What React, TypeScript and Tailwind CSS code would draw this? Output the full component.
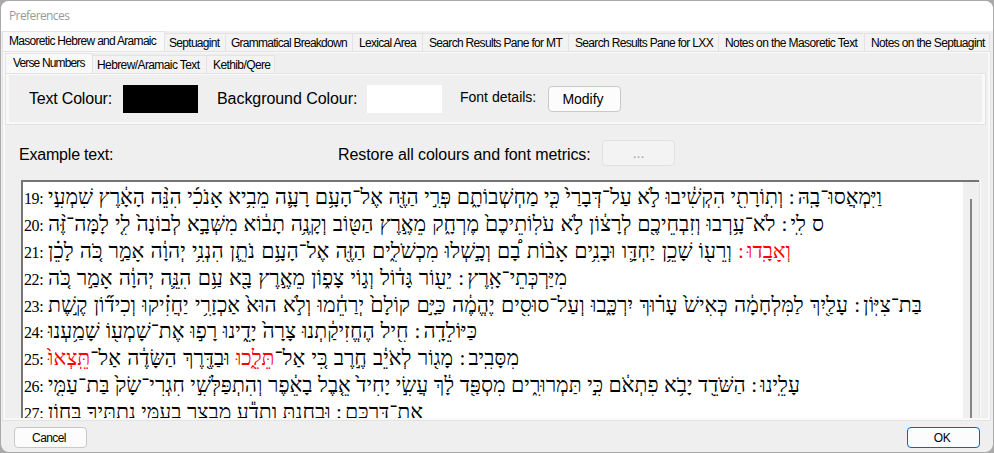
import React from "react";

const mainTabs: [string, string, string][] = [
  ["Septuagint", "w-[61px] pl-[4px]", "tracking-[-0.7px]"],
  ["Grammatical Breakdown", "w-[127px] pl-[5px]", "tracking-[-0.74px]"],
  ["Lexical Area", "w-[70px] pl-[6px]", "tracking-[-0.7px]"],
  ["Search Results Pane for MT", "w-[146px] pl-[6px]", "tracking-[-0.68px]"],
  ["Search Results Pane for LXX", "w-[150px] pl-[6px]", "tracking-[-0.67px]"],
  ["Notes on the Masoretic Text", "w-[146px] pl-[6px]", "tracking-[-0.6px]"],
  ["Notes on the Septuagint", "w-[125px] pl-[6px]", "tracking-[-0.66px]"],
];

type Verse = { n: number; width: string; text: string };

// Words between asterisks are shown in red.
const verses: Verse[] = [
  { n: 19, width: "w-[834px]", text: "וַיִּמְאֲסוּ־בָֽהּ׃ וְתֽוֹרָתִ֖י הִקְשִׁ֔יבוּ לֹ֣א עַל־דְּבָרַי֙ כִּ֤י מַחְשְׁבוֹתָ֑ם פְּרִ֣י הַזֶּ֖ה אֶל־הָעָ֥ם רָעָ֛ה מֵבִ֥יא אָנֹכִ֜י הִנֵּ֨ה הָאָ֔רֶץ שִׁמְעִ֣י" },
  { n: 20, width: "w-[776px]", text: "ס לִֽי׃ לֹא־עָ֥רְבוּ וְזִבְחֵיכֶ֖ם לְרָצ֔וֹן לֹ֣א עֹלֽוֹתֵיכֶם֙ מֶרְחָ֑ק מֵאֶ֣רֶץ הַטּ֖וֹב וְקָנֶ֥ה תָב֔וֹא מִשְּׁבָ֣א לְבוֹנָה֙ לִ֤י לָמָּה־זֶּ֨ה" },
  { n: 21, width: "w-[743px]", text: "*וְאָבָֽדוּ׃* וְרֵע֖וֹ שָׁכֵ֥ן יַחְדָּ֛ו וּבָנִ֥ים אָב֨וֹת בָ֠ם וְכָ֣שְׁלוּ מִכְשֹׁלִ֑ים הַזֶּ֖ה אֶל־הָעָ֥ם נֹתֵ֛ן הִנְנִ֥י יְהוָ֔ה אָמַ֣ר כֹּ֚ה לָכֵ֗ן" },
  { n: 22, width: "w-[519px]", text: "מִיַּרְכְּתֵי־אָֽרֶץ׃ יֵע֖וֹר גָּד֔וֹל וְג֣וֹי צָפ֑וֹן מֵאֶ֣רֶץ בָּ֖א עַ֥ם הִנֵּ֛ה יְהוָ֔ה אָמַ֣ר כֹּ֚ה" },
  { n: 23, width: "w-[874px]", text: "בַּת־צִיּֽוֹן׃ עָלַ֖יִךְ לַמִּלְחָמָ֔ה כְּאִישׁ֙ עָר֗וּךְ יִרְכָּ֑בוּ וְעַל־סוּסִ֖ים יֶהֱמֶ֔ה כַּיָּ֣ם קוֹלָם֙ יְרַחֵ֔מוּ וְלֹ֣א הוּא֙ אַכְזָרִ֥י יַחֲזִ֗יקוּ וְכִיד֞וֹן קֶ֣שֶׁת" },
  { n: 24, width: "w-[429px]", text: "כַּיּוֹלֵדָֽה׃ חִ֖יל הֶחֱזִיקַ֔תְנוּ צָרָה֙ יָדֵ֑ינוּ רָפ֣וּ אֶת־שָׁמְע֖וֹ שָׁמַ֥עְנוּ" },
  { n: 25, width: "w-[471px]", text: "מִסָּבִֽיב׃ מָג֖וֹר לְאֹיֵ֔ב חֶ֣רֶב כִּ֚י אַל־*תֵּלֵ֑כוּ* וּבַדֶּ֖רֶךְ הַשָּׂדֶ֔ה אַל־*תֵּֽצְאוּ֙*" },
  { n: 26, width: "w-[752px]", text: "עָלֵֽינוּ׃ הַשֹּׁדֵ֖ד יָבֹ֥א פִתְאֹ֔ם כִּ֣י תַּמְרוּרִ֑ים מִסְפַּ֖ד לָ֔ךְ עֲשִׂ֣י יָחִיד֙ אֵ֤בֶל בָאֵ֔פֶר וְהִתְפַּלְּשִׁ֣י חִגְרִי־שָׂק֙ בַּת־עַמִּ֤י" },
  { n: 27, width: "w-[375px]", text: "אֶת־דַּרְכָּֽם׃ וּבָחַנְתָּ֖ וְתֵדַ֕ע מִבְצָ֑ר בְעַמִּ֛י נְתַתִּ֥יךָ בָּח֛וֹן" },
];

function Label({ children, className }: { children: React.ReactNode; className: string }) {
  return <span className={`block shrink-0 whitespace-nowrap ${className}`}>{children}</span>;
}

// Gives the sof pasuq an advance of its own, since its glyph has almost none.
function Words({ text }: { text: string }) {
  const [head, tail] = text.split("׃");
  return tail === undefined ? (
    <>{head}</>
  ) : (
    <>
      {head}
      <span className="ms-[5px] tracking-[4px]">׃</span>
      {tail}
    </>
  );
}

export default function App() {
  return (
    <div className="h-[453px] w-[994px] overflow-hidden bg-[#aaaaaa] pt-px pl-px font-['Liberation_Sans',Arial,sans-serif] text-black">
      <div className="flex h-[451px] w-[992px] flex-col overflow-hidden rounded-lg bg-[#efefef]">
        <div className="h-[30px] shrink-0 bg-white pl-2 font-['Open_Sans','Noto_Sans',sans-serif] text-[12px] leading-[30px] tracking-[-0.6px] text-[#999]">
          Preferences
        </div>

        <div className="flex h-[20px] shrink-0 items-end pl-px text-[12px]">
          <div className="h-[20px] w-[163px] shrink-0 border-x border-t border-[#e3e3e3] bg-[#f9f9f9] pl-[6px] leading-[18px]">
            <Label className="tracking-[-0.7px]">Masoretic Hebrew and Aramaic</Label>
          </div>
          {mainTabs.map(([name, box, tracking]) => (
            <div key={name} className={`h-[18px] shrink-0 border-t border-r border-[#e3e3e3] bg-[#f3f3f3] leading-[18px] ${box}`}>
              <Label className={tracking}>{name}</Label>
            </div>
          ))}
        </div>

        <div className="ml-px flex h-[370px] w-[989px] shrink-0 flex-col border border-[#e3e3e3] bg-[#f9f9f9] px-[2px] pt-px pb-[2px]">
          <div className="flex min-h-0 flex-1 flex-col bg-[#efefef]">
            <div className="flex h-[20px] shrink-0 items-end text-[12px]">
              <div className="h-[20px] w-[88px] border-x border-t border-[#e3e3e3] bg-[#f9f9f9] pl-[7px] leading-[18px]">
                <Label className="tracking-[-0.85px]">Verse Numbers</Label>
              </div>
              <div className="h-[18px] w-[114px] border-t border-r border-[#e3e3e3] bg-[#f3f3f3] pl-[4px] leading-[18px]">
                <Label className="tracking-[-0.6px]">Hebrew/Aramaic Text</Label>
              </div>
              <div className="h-[18px] w-[68px] border-t border-r border-[#e3e3e3] bg-[#f3f3f3] pl-[6px] leading-[18px]">
                <Label className="tracking-[-0.6px]">Kethib/Qere</Label>
              </div>
            </div>
            <div className="h-[52px] w-[981px] shrink-0 border border-[#e3e3e3] bg-[#f9f9f9] px-[3px] pt-px">
              <div className="flex h-[47px] items-start bg-[#efefef] pl-[20px] text-[16px]">
                <Label className="mt-[14px] w-[94px] tracking-[-0.2px] leading-[20px]">Text Colour:</Label>
                <div className="mt-[10px] h-[28px] w-[75px] bg-black" />
                <Label className="mt-[14px] ml-[19px] w-[150px] tracking-[-0.06px] leading-[20px]">Background Colour:</Label>
                <div className="mt-[10px] h-[28px] w-[75px] bg-white" />
                <Label className="mt-[12px] ml-[18px] w-[88px] text-[14px] leading-[20px]">Font details:</Label>
                <button className="mt-[11px] h-[26px] w-[73px] rounded border border-[#c8c8c8] bg-[#fcfcfc] pr-[3px] text-[14px] leading-[24px]">Modify</button>
              </div>
            </div>

            <div className="flex h-[55px] shrink-0 items-start pl-[14px] text-[16px]">
              <Label className="mt-[20px] w-[319px] tracking-[-0.2px] leading-[20px]">Example text:</Label>
              <Label className="mt-[20px] w-[264px] tracking-[-0.07px] leading-[20px]">Restore all colours and font metrics:</Label>
              <button className="mt-[15px] h-[26px] w-[73px] rounded border border-[#e1e1e1] bg-[#f3f3f3] text-[14px] leading-[24px] text-[#a0a0a0]">...</button>
            </div>

            <div className="flex min-h-0 flex-1 pl-[16px]">
              <div className="flex min-h-0 w-[958px] shrink-0 overflow-hidden border-t-2 border-l-2 border-[#757575] bg-white">
                <div className="flex w-[940px] shrink-0 flex-col pt-[3px] font-['Liberation_Serif','Times_New_Roman',serif]">
                  {verses.map((v) => (
                    <div key={v.n} className={`flex shrink-0 pl-px text-[16px] leading-[27px] ${v.n === 23 ? "h-[26px]" : "h-[27px]"}`}>
                      <span className="w-[24px] shrink-0 whitespace-nowrap tracking-[-0.4px]">{v.n}:</span>
                      <div dir="rtl" className={`-mt-px h-[27px] shrink-0 whitespace-nowrap text-[21.2px] leading-[27px] [text-align-last:justify] ${v.width}`}>
                        {v.text.split("*").map((part, i) => (
                          <span key={i} className={i % 2 ? "text-[#ff0000]" : "text-black"}>
                            <Words text={part} />
                          </span>
                        ))}
                      </div>
                    </div>
                  ))}
                </div>
                <div className="flex w-[16px] shrink-0 justify-center bg-[#efefef] pt-[17px]">
                  <div className="h-full w-[2px] bg-[#858585]" />
                </div>
              </div>
              <div className="w-[2px] border-l border-[#e3e3e3] bg-[#f9f9f9]" />
            </div>
          </div>
        </div>

        <div className="flex min-h-0 flex-1 items-start justify-between pt-[6px] pr-[13px] pl-[13px] text-[12px]">
          <button className="h-[21px] w-[73px] rounded border border-[#c8c8c8] bg-[#fcfcfc] pr-[3px] tracking-[-0.6px] leading-[20px]">Cancel</button>
          <button className="h-[21px] w-[73px] rounded border border-[#0067c0] bg-[#fcfcfc] pr-[3px] tracking-[-0.5px] leading-[20px]">OK</button>
        </div>
      </div>
    </div>
  );
}
